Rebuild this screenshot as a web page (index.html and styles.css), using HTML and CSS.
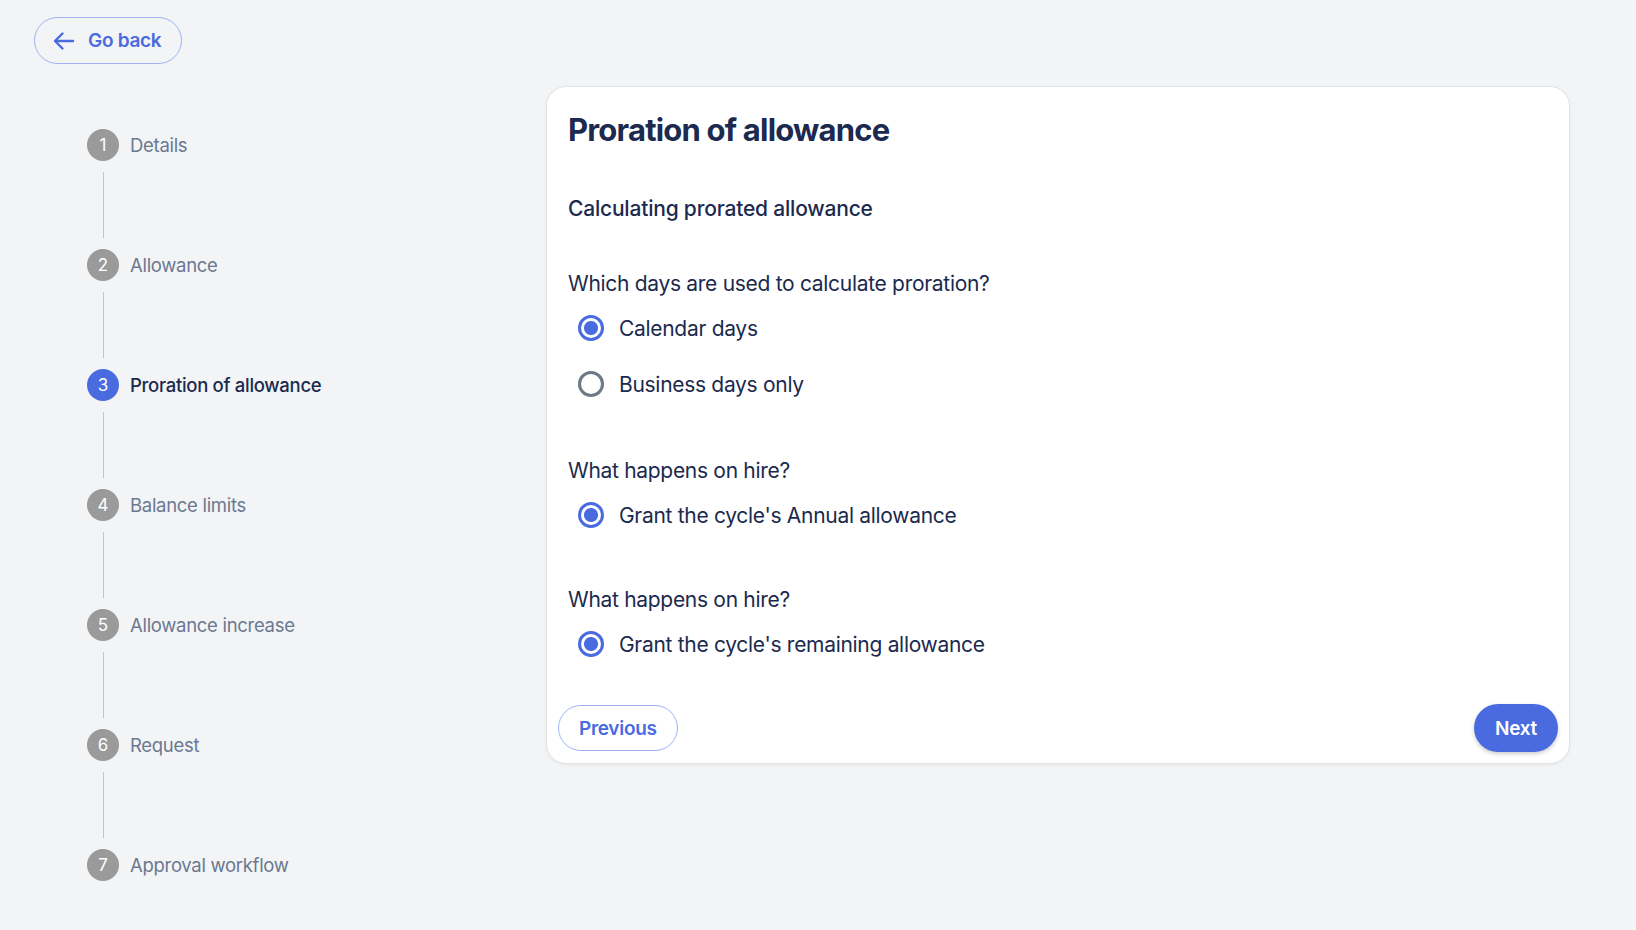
FILE: index.html
```html
<!DOCTYPE html>
<html>
  <head>
    <title>Proration of allowance</title>
    <link rel="stylesheet" href="styles.css">
  </head>
  <body>
    <header class="top-bar">
      <button class="back-button">
        <svg width="24" height="24" viewBox="0 0 24 24" fill="none" stroke="currentColor" stroke-width="2.4" stroke-linecap="round" stroke-linejoin="round">
          <path d="M21 12H3.5" />
          <path d="M10.5 4.5 3 12l7.5 7.5" />
        </svg>
        Go back
      </button>
    </header>

    <main class="layout">
      <nav class="steps">
        <div class="step">
          <span class="step-number">1</span>
          <span class="step-label">Details</span>
        </div>
        <div class="step-connector"></div>
        <div class="step">
          <span class="step-number">2</span>
          <span class="step-label">Allowance</span>
        </div>
        <div class="step-connector"></div>
        <div class="step active">
          <span class="step-number">3</span>
          <span class="step-label">Proration of allowance</span>
        </div>
        <div class="step-connector"></div>
        <div class="step">
          <span class="step-number">4</span>
          <span class="step-label">Balance limits</span>
        </div>
        <div class="step-connector"></div>
        <div class="step">
          <span class="step-number">5</span>
          <span class="step-label">Allowance increase</span>
        </div>
        <div class="step-connector"></div>
        <div class="step">
          <span class="step-number">6</span>
          <span class="step-label">Request</span>
        </div>
        <div class="step-connector"></div>
        <div class="step">
          <span class="step-number">7</span>
          <span class="step-label">Approval workflow</span>
        </div>
      </nav>

      <section class="card">
        <div class="card-body">
          <h1>Proration of allowance</h1>
          <h2>Calculating prorated allowance</h2>

          <div class="question first">
            <p class="question-label">Which days are used to calculate proration?</p>
            <label class="option">
              <input type="radio" name="days" checked />
              <span>Calendar days</span>
            </label>
            <label class="option">
              <input type="radio" name="days" />
              <span>Business days only</span>
            </label>
          </div>

          <div class="question">
            <p class="question-label">What happens on hire?</p>
            <label class="option">
              <input type="radio" name="hire" checked />
              <span>Grant the cycle's Annual allowance</span>
            </label>
          </div>

          <div class="question last">
            <p class="question-label">What happens on hire?</p>
            <label class="option">
              <input type="radio" name="hire-remaining" checked />
              <span>Grant the cycle's remaining allowance</span>
            </label>
          </div>
        </div>

        <div class="card-footer">
          <button class="btn-outline">Previous</button>
          <button class="btn-primary">Next</button>
        </div>
      </section>
    </main>
  </body>
</html>
```

FILE: styles.css
```css
body {
  margin: 0;
  padding: 17px 0 0 34px;
  background-color: #f3f4f6;
  font-family: Inter, "Noto Sans", sans-serif;
  color: #1b2a4e;
}
button {
  font-family: inherit;
  cursor: pointer;
}
.top-bar {
  display: flex;
}
.back-button {
  display: flex;
  align-items: center;
  gap: 12px;
  height: 47px;
  padding: 0 20px 0 17px;
  background: transparent;
  border: 1px solid #9fb2f3;
  border-radius: 24px;
  color: #4a6be0;
  font-size: 19px;
  font-weight: 600;
  letter-spacing: -0.3px;
}
.layout {
  display: grid;
  grid-template-columns: 512px 1024px;
  align-items: start;
  margin-top: 22px;
}
.steps {
  display: flex;
  flex-direction: column;
  padding: 43px 0 0 53px;
}
.step {
  display: flex;
  align-items: center;
  gap: 11px;
  height: 32px;
}
.step-number {
  display: flex;
  align-items: center;
  justify-content: center;
  width: 32px;
  height: 32px;
  border-radius: 50%;
  background-color: #9a9a9a;
  color: #fff;
  font-size: 17px;
}
.step-label {
  font-size: 18.5px;
  letter-spacing: -0.3px;
  color: #6b7891;
}
.step.active .step-number {
  background-color: #4a6be0;
}
.step.active .step-label {
  color: #1b2a4e;
  font-weight: 500;
}
.step-connector {
  width: 1px;
  height: 66px;
  margin: 11px 0 11px 16px;
  background-color: #c4c4c4;
}
.card {
  background-color: #fff;
  border: 1px solid #e2e3e6;
  border-radius: 20px;
  box-shadow: 0 1px 3px rgba(0, 0, 0, 0.06);
}
.card-body {
  padding: 23px 21px 0;
}
h1 {
  margin: 0;
  font-size: 31px;
  line-height: 40px;
  font-weight: 700;
  letter-spacing: -0.8px;
}
h2 {
  margin: 45px 0 0;
  font-size: 21px;
  line-height: 28px;
  font-weight: 500;
  letter-spacing: -0.2px;
}
.question {
  margin-top: 45px;
}
.question.first {
  margin-top: 47px;
}
.question.last {
  margin-top: 43px;
}
.question-label {
  margin: 0 0 2px;
  font-size: 21px;
  line-height: 28px;
  letter-spacing: -0.3px;
}
.option {
  display: flex;
  align-items: center;
  gap: 15px;
  height: 56px;
  padding-left: 10px;
  font-size: 21px;
  letter-spacing: -0.3px;
  cursor: pointer;
}
.option input {
  appearance: none;
  margin: 0;
  width: 26px;
  height: 26px;
  border: 3px solid #6e7788;
  border-radius: 50%;
  background-color: #fff;
}
.option input:checked {
  border-color: #4a6be0;
  background: radial-gradient(circle, #4a6be0 0 6.5px, #fff 7.5px);
}
.card-footer {
  display: flex;
  align-items: center;
  justify-content: space-between;
  height: 48px;
  padding: 32px 11px 11px;
}
.btn-outline {
  height: 46px;
  padding: 0 20px;
  background: #fff;
  border: 1px solid #9fb2f3;
  border-radius: 23px;
  color: #4a6be0;
  font-size: 19px;
  font-weight: 600;
  letter-spacing: -0.3px;
}
.btn-primary {
  height: 48px;
  padding: 0 21px;
  background-color: #4a6be0;
  border: none;
  border-radius: 24px;
  color: #fff;
  font-size: 19px;
  font-weight: 600;
  letter-spacing: -0.3px;
  box-shadow: 0 2px 4px rgba(0, 0, 0, 0.2);
}
```
